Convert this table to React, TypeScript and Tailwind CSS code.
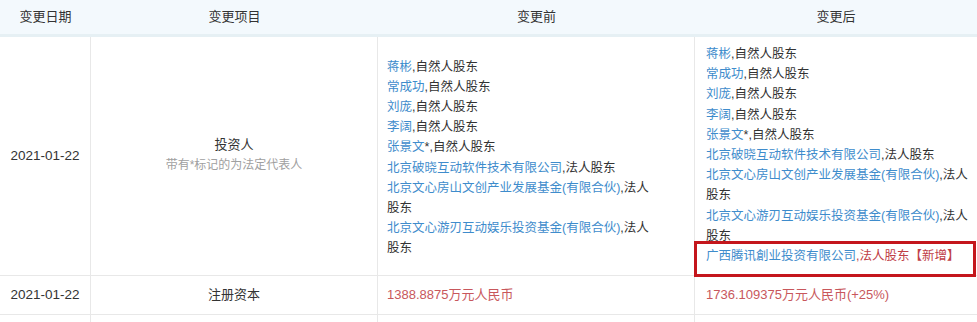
import React from 'react'

type Holder = { name: string; role: string }

const before: Holder[] = [
  { name: '蒋彬', role: '自然人股东' },
  { name: '常成功', role: '自然人股东' },
  { name: '刘庞', role: '自然人股东' },
  { name: '李阔', role: '自然人股东' },
  { name: '张景文*', role: '自然人股东' },
  { name: '北京破晓互动软件技术有限公司', role: '法人股东' },
  { name: '北京文心房山文创产业发展基金(有限合伙)', role: '法人股东' },
  { name: '北京文心游刃互动娱乐投资基金(有限合伙)', role: '法人股东' },
]

const font = "font-['Liberation_Sans','Noto_Sans_CJK_SC',sans-serif]"

function HolderLine({ h }: { h: Holder }) {
  const star = h.name.endsWith('*')
  const name = star ? h.name.slice(0, -1) : h.name
  return (
    <div>
      <span className="text-[#3e8ccc]">{name}</span>
      {star && <span>*</span>}
      <span>,{h.role}</span>
    </div>
  )
}

export default function App() {
  return (
    <div className={`w-[977px] h-[322px] overflow-hidden bg-white text-[12.5px] leading-[20.2px] text-[#333] ${font}`}>
      {/* header */}
      <div className="grid grid-cols-[91px_287px_317px_282px] h-[37px] bg-[#f3f9fd] border-b-[3px] border-[#e6f0f4]">
        <div className="flex items-center justify-center text-[13px]">变更日期</div>
        <div className="flex items-center justify-center text-[13px]">变更项目</div>
        <div className="flex items-center justify-center text-[13px]">变更前</div>
        <div className="flex items-center justify-center text-[13px]">变更后</div>
      </div>

      {/* row 1 */}
      <div className="grid grid-cols-[91px_287px_317px_282px] border-b border-[#e8e8e8]">
        <div className="flex items-center justify-center border-r border-[#e8e8e8] text-[13.5px]">2021-01-22</div>
        <div className="flex flex-col items-center justify-center border-r border-[#e8e8e8] pb-[2px]">
          <div className="text-[13px]">投资人</div>
          <div className="text-[12px] text-[#a0a0a0]">带有*标记的为法定代表人</div>
        </div>
        <div className="flex items-center border-r border-[#e8e8e8] pl-[9px] pt-[3px]">
          <div className="max-w-[274px]">
            {before.map((h) => (
              <HolderLine key={h.name} h={h} />
            ))}
          </div>
        </div>
        <div className="pl-[11px] pt-[7px] pb-[9px]">
          <div className="max-w-[268px]">
            {before.map((h) => (
              <HolderLine key={h.name} h={h} />
            ))}
            <div className="relative">
              <span className="text-[#3e8ccc]">广西腾讯創业投资有限公司</span>
              <span className="text-[#bf4047]">,法人股东【新增】</span>
              <div className="absolute left-[-12px] right-[-2px] top-[-5px] bottom-[-11px] border-[3px] border-[#c4161c]" />
            </div>
          </div>
        </div>
      </div>

      {/* row 2 */}
      <div className="grid grid-cols-[91px_287px_317px_282px] h-[39px] border-b border-[#e8e8e8]">
        <div className="flex items-center justify-center border-r border-[#e8e8e8] text-[13.5px]">2021-01-22</div>
        <div className="flex items-center justify-center border-r border-[#e8e8e8] text-[13px]">注册资本</div>
        <div className="flex items-center border-r border-[#e8e8e8] pl-[9px] text-[13px] text-[#c8575c]">1388.8875万元人民币</div>
        <div className="flex items-center pl-[11px] text-[13px] text-[#c8575c]">1736.109375万元人民币(+25%)</div>
      </div>

      {/* row 3 (cut off) */}
      <div className="grid grid-cols-[91px_287px_317px_282px] h-[40px]">
        <div className="border-r border-[#e8e8e8]" />
        <div className="border-r border-[#e8e8e8]" />
        <div className="border-r border-[#e8e8e8]" />
        <div />
      </div>
    </div>
  )
}
